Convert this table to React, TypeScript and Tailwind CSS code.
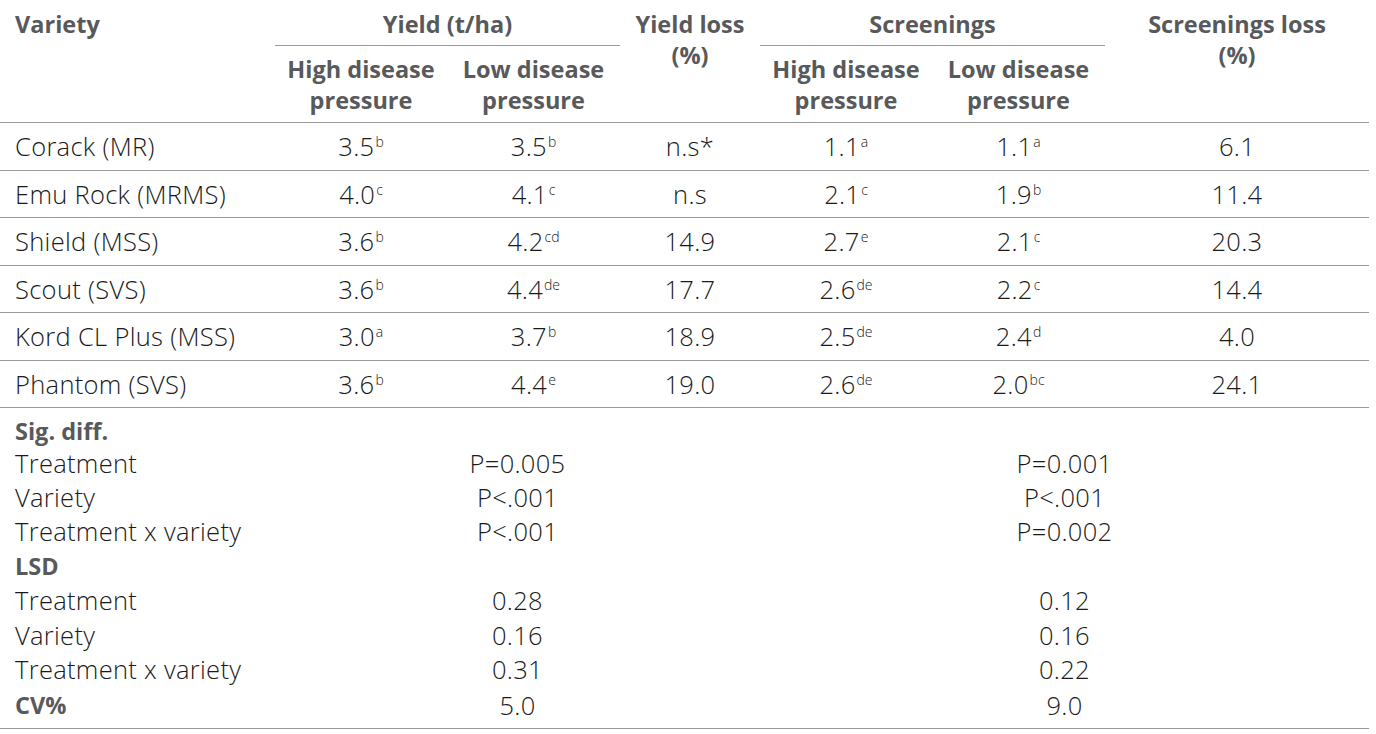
const rows = [
  { name: "Corack (MR)", yh: ["3.5", "b"], yl: ["3.5", "b"], loss: "n.s*", sh: ["1.1", "a"], sl: ["1.1", "a"], sloss: "6.1" },
  { name: "Emu Rock (MRMS)", yh: ["4.0", "c"], yl: ["4.1", "c"], loss: "n.s", sh: ["2.1", "c"], sl: ["1.9", "b"], sloss: "11.4" },
  { name: "Shield (MSS)", yh: ["3.6", "b"], yl: ["4.2", "cd"], loss: "14.9", sh: ["2.7", "e"], sl: ["2.1", "c"], sloss: "20.3" },
  { name: "Scout (SVS)", yh: ["3.6", "b"], yl: ["4.4", "de"], loss: "17.7", sh: ["2.6", "de"], sl: ["2.2", "c"], sloss: "14.4" },
  { name: "Kord CL Plus (MSS)", yh: ["3.0", "a"], yl: ["3.7", "b"], loss: "18.9", sh: ["2.5", "de"], sl: ["2.4", "d"], sloss: "4.0" },
  { name: "Phantom (SVS)", yh: ["3.6", "b"], yl: ["4.4", "e"], loss: "19.0", sh: ["2.6", "de"], sl: ["2.0", "bc"], sloss: "24.1" },
];

const stats = [
  { label: "Sig. diff.", bold: true },
  { label: "Treatment", left: "P=0.005", right: "P=0.001" },
  { label: "Variety", left: "P<.001", right: "P<.001" },
  { label: "Treatment x variety", left: "P<.001", right: "P=0.002" },
  { label: "LSD", bold: true },
  { label: "Treatment", left: "0.28", right: "0.12" },
  { label: "Variety", left: "0.16", right: "0.16" },
  { label: "Treatment x variety", left: "0.31", right: "0.22" },
  { label: "CV%", bold: true, left: "5.0", right: "9.0" },
];

function Val({ v }: { v: string[] }) {
  return (
    <>
      {v[0]}
      <sup className="text-[14px] tracking-normal top-[-9px] ml-[1px]">{v[1]}</sup>
    </>
  );
}

export default function App() {
  const head = "font-bold text-[#58595b] text-[23.5px] leading-[31px] align-top";
  return (
    <div className="bg-white w-[1376px] h-[734px] font-['Open_Sans',sans-serif] text-[#1a1a1a]">
      <table className="w-[1369px] border-collapse table-fixed">
        <colgroup>
          <col className="w-[275px]" />
          <col className="w-[172px]" />
          <col className="w-[173px]" />
          <col className="w-[140px]" />
          <col className="w-[172px]" />
          <col className="w-[173px]" />
          <col className="w-[264px]" />
        </colgroup>
        <thead>
          <tr>
            <th rowSpan={2} className={`${head} text-left pl-[15px] pt-[9px] border-b border-[#999]`}>Variety</th>
            <th colSpan={2} className={`${head} text-center pt-[9px] pb-[5px]`}>
              <div className="border-b border-[#999] pb-[5px]">Yield (t/ha)</div>
            </th>
            <th rowSpan={2} className={`${head} text-center pt-[9px] border-b border-[#999]`}>
              Yield loss
              <br />
              (%)
            </th>
            <th colSpan={2} className={`${head} text-center pt-[9px] pb-[5px]`}>
              <div className="border-b border-[#999] pb-[5px]">Screenings</div>
            </th>
            <th rowSpan={2} className={`${head} text-center pt-[9px] border-b border-[#999]`}>
              Screenings loss
              <br />
              (%)
            </th>
          </tr>
          <tr className="border-b border-[#999]">
            {[0, 1, 2, 3].map((i) => (
              <th key={i} className={`${head} text-center pt-[3px] pb-[6px]`}>
                {i % 2 === 0 ? "High disease" : "Low disease"}
                <br />
                pressure
              </th>
            ))}
          </tr>
        </thead>
        <tbody className="text-[25.5px] font-light tracking-[0.3px]">
          {rows.map((r) => (
            <tr key={r.name} className="h-[47.5px] border-b border-[#999]">
              <td className="pl-[15px] text-left">{r.name}</td>
              <td className="text-center"><Val v={r.yh} /></td>
              <td className="text-center"><Val v={r.yl} /></td>
              <td className="text-center">{r.loss}</td>
              <td className="text-center"><Val v={r.sh} /></td>
              <td className="text-center"><Val v={r.sl} /></td>
              <td className="text-center">{r.sloss}</td>
            </tr>
          ))}
          {stats.map((s, i) => {
            const last = i === stats.length - 1;
            const rowCls = last ? "border-b border-[#999] h-[42px] align-top" : i === 0 ? "h-[38px] align-bottom" : "h-[34.4px]";
            const pad = last ? "pt-[4px]" : "";
            return (
              <tr key={i} className={rowCls}>
                <td className={`pl-[15px] text-left leading-[30px] ${pad} ${s.bold ? "font-bold tracking-normal text-[23.5px] text-[#58595b]" : ""}`}>{s.label}</td>
                <td colSpan={3} className={`text-center leading-[30px] ${pad}`}>{s.left}</td>
                <td colSpan={3} className={`text-center leading-[30px] ${pad}`}>{s.right}</td>
              </tr>
            );
          })}
        </tbody>
      </table>
    </div>
  );
}
